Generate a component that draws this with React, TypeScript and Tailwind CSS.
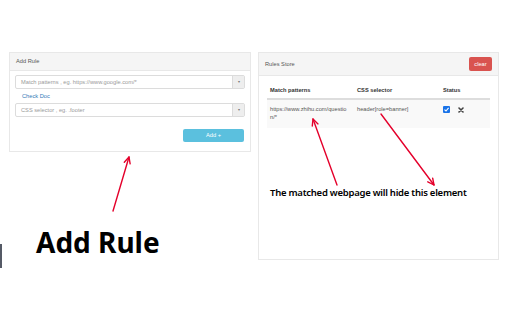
import React from "react";

const sans = { fontFamily: '"Liberation Sans", Arial, sans-serif' };

function Arrow({ x1, y1, x2, y2 }: { x1: number; y1: number; x2: number; y2: number }) {
  const a = Math.atan2(y2 - y1, x2 - x1);
  const len = 7;
  const spread = 0.45;
  const p1 = [x2 - len * Math.cos(a - spread), y2 - len * Math.sin(a - spread)];
  const p2 = [x2 - len * Math.cos(a + spread), y2 - len * Math.sin(a + spread)];
  return (
    <g stroke="#e4002b" strokeWidth={1.4} fill="none" strokeLinecap="round" strokeLinejoin="round">
      <line x1={x1} y1={y1} x2={x2} y2={y2} />
      <polyline points={`${p1[0]},${p1[1]} ${x2},${y2} ${p2[0]},${p2[1]}`} />
    </g>
  );
}

function SelectInput({ placeholder }: { placeholder: string }) {
  return (
    <div className="flex h-[14px] w-full rounded-[2px] border border-[#dcdcdc] bg-white">
      <div className="flex flex-1 items-center pl-[5px] text-[5.7px] text-[#9a9a9a]">{placeholder}</div>
      <div className="flex w-[12px] items-center justify-center border-l border-[#dcdcdc] bg-[#eeeeee] text-[4px] text-[#777]">
        ▾
      </div>
    </div>
  );
}

export default function App() {
  return (
    <div className="relative h-[320px] w-[512px] overflow-hidden bg-white" style={sans}>
      <div className="flex items-start pt-[52px] pl-[9px] gap-[7px]">
        {/* left column */}
        <div className="flex w-[242px] flex-col">
          <div className="border border-[#e8e8e8] bg-white">
            <div className="flex h-[18px] items-center border-b border-[#e8e8e8] bg-[#f5f5f5] px-[6px] text-[5.7px] text-[#555]">
              Add Rule
            </div>
            <div className="flex flex-col px-[5px] pt-[4px] pb-[9px]">
              <SelectInput placeholder="Match patterns , eg. https://www.google.com/*" />
              <div className="flex h-[14px] items-center pl-[7px] text-[5.7px] text-[#337ab7]">Check Doc</div>
              <SelectInput placeholder="CSS selector , eg. .footer" />
              <div className="mt-[12px] flex justify-end pr-[1px]">
                <div className="flex h-[13px] w-[61px] items-center justify-center rounded-[2px] bg-[#5bc0de] text-[5.7px] text-white">
                  Add +
                </div>
              </div>
            </div>
          </div>
          <div
            className="mt-[76px] pl-[27px] text-[28px] font-bold leading-none text-black"
            style={{ fontFamily: '"Noto Sans", sans-serif' }}
          >
            Add Rule
          </div>
        </div>

        {/* right panel */}
        <div className="flex h-[208px] w-[241px] flex-col border border-[#e8e8e8] bg-white">
          <div className="flex h-[23px] items-center justify-between border-b border-[#e8e8e8] bg-[#f5f5f5] pl-[6px] pr-[6px] text-[5.7px] text-[#555]">
            <span>Rules Store</span>
            <div className="flex h-[14px] w-[23px] items-center justify-center rounded-[2px] bg-[#d9534f] text-[5.7px] text-white">
              clear
            </div>
          </div>
          <div className="px-[8px] pt-[6px]">
            <div className="flex h-[18px] items-center border-b-2 border-[#dddddd] text-[5.7px] font-bold text-[#333]">
              <div className="w-[87px] pl-[3px]">Match patterns</div>
              <div className="w-[86px] pl-[3px]">CSS selector</div>
              <div className="flex-1 pl-[3px]">Status</div>
            </div>
            <div className="flex h-[28px] items-start bg-[#f9f9f9] pt-[5px] text-[5.7px] leading-[8px] text-[#555]">
              <div className="w-[87px] pl-[3px] pr-[6px] break-all">https://www.zhihu.com/questio n/*</div>
              <div className="w-[86px] pl-[3px]">header[role=banner]</div>
              <div className="flex flex-1 items-center gap-[8px] pl-[3px] pt-[1px]">
                <svg width="7" height="7" viewBox="0 0 7 7">
                  <rect x="0" y="0" width="7" height="7" rx="1" fill="#1a73e8" />
                  <path d="M1.5 3.6 L3 5 L5.6 1.8" stroke="#fff" strokeWidth="1.1" fill="none" />
                </svg>
                <svg width="6" height="6" viewBox="0 0 6 6">
                  <path d="M1 1 L5 5 M5 1 L1 5" stroke="#444" strokeWidth="1.6" strokeLinecap="round" />
                </svg>
              </div>
            </div>
            <div
              className="mt-[58px] pl-[3px] text-[9.5px] font-semibold tracking-[-0.25px] text-black"
              style={{ fontFamily: '"Noto Sans", sans-serif' }}
            >
              The matched webpage will hide this element
            </div>
          </div>
        </div>
      </div>

      <div className="absolute left-0 top-[244px] h-[24px] w-[2px] bg-[#555a66]" />

      <svg className="pointer-events-none absolute left-0 top-0" width="512" height="320">
        <Arrow x1={113} y1={211} x2={129} y2={157} />
        <Arrow x1={337} y1={185} x2={313} y2={119} />
        <Arrow x1={381} y1={114} x2={434} y2={185} />
      </svg>
    </div>
  );
}
